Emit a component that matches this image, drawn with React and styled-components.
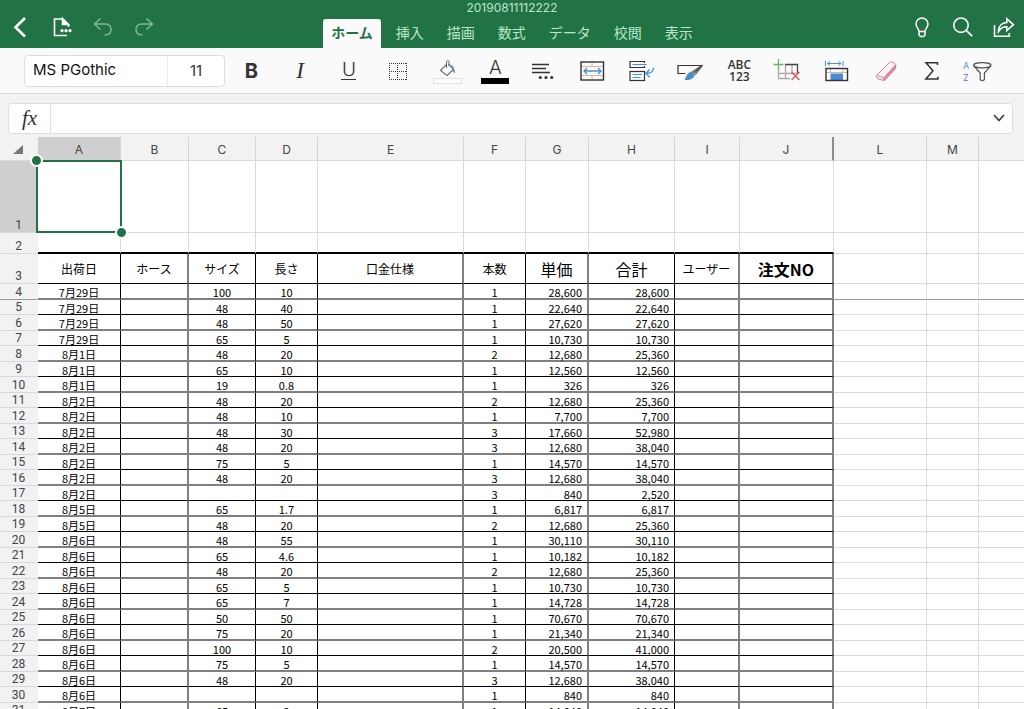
import React, { useState } from 'react';
import styled, { createGlobalStyle } from 'styled-components';

const GlobalStyle = createGlobalStyle`
  *,
  *::before,
  *::after {
    box-sizing: border-box;
  }
  body {
    margin: 0;
    font-family: Inter, 'Noto Sans CJK JP', sans-serif;
    background: #fff;
  }
  button,
  input {
    font: inherit;
    color: inherit;
    margin: 0;
    padding: 0;
    border: 0;
    background: none;
  }
`;

const tabs = ['ホーム', '挿入', '描画', '数式', 'データ', '校閲', '表示'];

const columns = [
  { id: 'A', width: 83, title: '出荷日' },
  { id: 'B', width: 68, title: 'ホース', thick: true },
  { id: 'C', width: 67, title: 'サイズ' },
  { id: 'D', width: 62, title: '長さ' },
  { id: 'E', width: 146, title: '口金仕様', thick: true },
  { id: 'F', width: 62, title: '本数' },
  { id: 'G', width: 63, title: '単価', large: true, number: true, thick: true },
  { id: 'H', width: 86, title: '合計', large: true, number: true },
  { id: 'I', width: 65, title: 'ユーザー', thick: true },
  { id: 'J', width: 94, title: '注文NO', large: true, bold: true, thick: true },
];

const plainColumns = [
  { id: 'L', width: 93 },
  { id: 'M', width: 52 },
  { id: '' },
];

// 出荷日, サイズ, 長さ, 本数, 単価, 合計
const orders = [
  ['7月29日', '100', '10', '1', '28,600', '28,600'],
  ['7月29日', '48', '40', '1', '22,640', '22,640'],
  ['7月29日', '48', '50', '1', '27,620', '27,620'],
  ['7月29日', '65', '5', '1', '10,730', '10,730'],
  ['8月1日', '48', '20', '2', '12,680', '25,360'],
  ['8月1日', '65', '10', '1', '12,560', '12,560'],
  ['8月1日', '19', '0.8', '1', '326', '326'],
  ['8月2日', '48', '20', '2', '12,680', '25,360'],
  ['8月2日', '48', '10', '1', '7,700', '7,700'],
  ['8月2日', '48', '30', '3', '17,660', '52,980'],
  ['8月2日', '48', '20', '3', '12,680', '38,040'],
  ['8月2日', '75', '5', '1', '14,570', '14,570'],
  ['8月2日', '48', '20', '3', '12,680', '38,040'],
  ['8月2日', '', '', '3', '840', '2,520'],
  ['8月5日', '65', '1.7', '1', '6,817', '6,817'],
  ['8月5日', '48', '20', '2', '12,680', '25,360'],
  ['8月6日', '48', '55', '1', '30,110', '30,110'],
  ['8月6日', '65', '4.6', '1', '10,182', '10,182'],
  ['8月6日', '48', '20', '2', '12,680', '25,360'],
  ['8月6日', '65', '5', '1', '10,730', '10,730'],
  ['8月6日', '65', '7', '1', '14,728', '14,728'],
  ['8月6日', '50', '50', '1', '70,670', '70,670'],
  ['8月6日', '75', '20', '1', '21,340', '21,340'],
  ['8月6日', '100', '10', '2', '20,500', '41,000'],
  ['8月6日', '75', '5', '1', '14,570', '14,570'],
  ['8月6日', '48', '20', '3', '12,680', '38,040'],
  ['8月6日', '', '', '1', '840', '840'],
  ['8月7日', '65', '2', '1', '14,040', '14,040'],
];

const toCells = ([date, size, length, count, price, total]) => ({
  A: date, C: size, D: length, F: count, G: price, H: total,
});

const BackIcon = () => (
  <HeaderSvg viewBox="0 0 24 24" strokeWidth="2.6">
    <path d="M16 3L6.5 12.3L16 21.5" />
  </HeaderSvg>
);

const FileIcon = () => (
  <HeaderSvg viewBox="0 0 24 24" strokeWidth="1.6">
    <path d="M13 4H4.5V20.5H17M18.5 9V12" />
    <path d="M12.5 3.5L18.5 9.5H12.5Z" fill="currentColor" />
    <g fill="currentColor" stroke="none">
      <circle cx="12" cy="15.7" r="1.6" />
      <circle cx="16" cy="15.7" r="1.6" />
      <circle cx="20" cy="15.7" r="1.6" />
    </g>
  </HeaderSvg>
);

const UndoIcon = () => (
  <HeaderSvg viewBox="0 0 24 24" strokeWidth="1.5">
    <path d="M9.5 3.5L3.5 9L9.5 14.5M3.5 9H14.5C18 9 20 11.5 20 14.5C20 17.8 17.5 20 13.5 20" />
  </HeaderSvg>
);

const RedoIcon = () => (
  <HeaderSvg viewBox="0 0 24 24" strokeWidth="1.5">
    <path d="M14.5 3.5L20.5 9L14.5 14.5M20.5 9H9.5C6 9 4 11.5 4 14.5C4 17.8 6.5 20 10.5 20" />
  </HeaderSvg>
);

const BulbIcon = () => (
  <HeaderSvg viewBox="0 0 24 24" strokeWidth="1.5">
    <path d="M9 16.5C9 13.5 6 12.5 6 9A6 6 0 0 1 18 9C18 12.5 15 13.5 15 16.5V20L13.5 21.5H10.5L9 20ZM9 16.5H15" />
  </HeaderSvg>
);

const SearchIcon = () => (
  <HeaderSvg viewBox="0 0 24 24" strokeWidth="1.6">
    <circle cx="10" cy="10.2" r="7.2" />
    <path d="M15.2 15.4L21.2 21.2" />
  </HeaderSvg>
);

const ShareIcon = () => (
  <HeaderSvg viewBox="0 0 24 24" strokeWidth="1.6">
    <path d="M2.5 10V21.3H17.3V18" />
    <path d="M6.5 16.5C6.5 11 9.8 7.7 14.8 7.5V3.8L21.4 9.7L14.8 15.5V11.8C11 11.8 8.5 13.3 6.5 16.5Z" />
  </HeaderSvg>
);

const BordersIcon = () => (
  <ToolSvg viewBox="0 0 40 32">
    <path d="M11 8.5H29M11 16.5H29M11 24.5H29M11.5 8V25M19.5 8V25M28.5 8V25" strokeDasharray="1 1" />
  </ToolSvg>
);

const FillIcon = () => (
  <ToolSvg viewBox="0 0 40 32">
    <path d="M19.5 9.5L13.5 15.5L20 20.5L26.5 14.5L21.5 9" stroke="#777" strokeWidth="1.3" />
    <path d="M19.5 13V6.5Q20.7 4.5 22 6.5V11" stroke="#666" />
    <path d="M23.5 9.5Q27.5 10.5 28 18.5L25.3 16L26.3 14.3Z" fill="#5b8fc0" stroke="none" />
    <rect x="6.5" y="23.5" width="28" height="5" fill="#fff" stroke="#e2e2e2" />
  </ToolSvg>
);

const AlignIcon = () => (
  <ToolSvg viewBox="0 0 40 32" strokeWidth="1.3">
    <path d="M8 9.5H25M8 13.5H22M8 17.5H26" />
    <g fill="#333" stroke="none">
      <circle cx="16.3" cy="22.5" r="1.6" />
      <circle cx="22" cy="22.5" r="1.6" />
      <circle cx="27.7" cy="22.5" r="1.6" />
    </g>
  </ToolSvg>
);

const MergeIcon = () => (
  <ToolSvg viewBox="0 0 40 32">
    <path d="M8 11.5H30M8 20.5H30M19 7V11M19 21V25" stroke="#d8b9a5" />
    <rect x="8" y="7" width="22.5" height="18" strokeWidth="1.4" />
    <path d="M11 16H28M14 13L11 16L14 19M25 13L28 16L25 19" stroke="#4a90cf" strokeWidth="1.3" />
  </ToolSvg>
);

const WrapIcon = () => (
  <ToolSvg viewBox="0 0 40 32" strokeWidth="1.2">
    <path d="M22.5 8V6.5H8V12.5H22.5V11" />
    <rect x="8" y="16.5" width="14.5" height="9" />
    <path d="M10.5 9.5H24.5M10.5 19.5H20M10.5 22.5H18.5" stroke="#4a90cf" />
    <path d="M31.5 12.5C31.5 16.5 29 18.5 24 18.5M27.5 14.5L23.7 18.5L27.7 22" stroke="#4a90cf" strokeWidth="1.3" />
  </ToolSvg>
);

const BrushIcon = () => (
  <ToolSvg viewBox="0 0 40 32" strokeWidth="1.2">
    <path d="M14.5 18.5H7V10.5H31L22 19" />
    <path d="M31.5 10L20.5 17.5M31.5 10.5L24 20" stroke="#555" />
    <path d="M14 24.5C16 23.5 15.5 17.5 20.5 17.5C24.5 18 24.5 24.5 14 24.5Z" fill="#4e8dcc" stroke="#4e8dcc" />
  </ToolSvg>
);

const InsertIcon = () => (
  <ToolSvg viewBox="0 0 40 32">
    <path d="M10.5 14V23.5H22M11 18.5H29M17.5 9V23M24 9V19" stroke="#aaa" strokeWidth="1.3" />
    <path d="M17 9.5H29.5V18" stroke="#444" strokeWidth="1.3" />
    <path d="M10.5 4V14M5.5 9.5H15.5" stroke="#6fae6a" strokeWidth="1.3" />
    <path d="M23.5 17L31.5 25M31.5 17L23.5 25" stroke="#e05252" strokeWidth="1.3" />
  </ToolSvg>
);

const WidthIcon = () => (
  <ToolSvg viewBox="0 0 40 32">
    <path d="M9 17.5H31M13.5 13V17M26 13V17" stroke="#c9b8a8" />
    <rect x="13.5" y="18.5" width="12.5" height="6.5" fill="#4a8bcf" stroke="none" />
    <rect x="9" y="13.5" width="21.5" height="12" strokeWidth="1.4" />
    <path d="M8.5 6V11M26 6V11M10.5 8.5H24M13 6.3L10.5 8.5L13 10.7M21.5 6.3L24 8.5L21.5 10.7" stroke="#4a90cf" />
  </ToolSvg>
);

const EraserIcon = () => (
  <ToolSvg viewBox="0 0 40 32">
    <path d="M10.5 20.5L23.5 7.5Q24.5 6.5 26 7L29 8.5Q30 9 29.8 10.5L29.5 13.5L19 24.8Q18 25.8 16.5 25.2L12 23.8Q10.5 23.3 10.5 20.5Z" fill="#fdf1f4" stroke="#d0869a" />
    <path d="M17.8 23L29.3 10L29.5 13.5L19 24.8Q18 25.6 17.3 25.2Z" fill="#dc8ba1" stroke="#d0869a" />
    <path d="M11 20.5L17.8 22.8" stroke="#d0869a" />
  </ToolSvg>
);

const SumIcon = () => (
  <ToolSvg viewBox="0 0 40 32" strokeWidth="1.5">
    <path d="M27.5 10V7.8H16L23 15.7L15.8 24H28V21.8" />
  </ToolSvg>
);

const SortIcon = () => (
  <ToolSvg viewBox="0 0 40 32">
    <text x="7" y="14" fontSize="9" fill="#5d95d6" stroke="none">A</text>
    <text x="7" y="26" fontSize="9" fill="#9064c4" stroke="none">Z</text>
    <ellipse cx="26.3" cy="10.3" rx="8.7" ry="2.6" stroke="#555" strokeWidth="1.2" />
    <path d="M17.6 10.5L24.2 18V24.5Q26.3 27 28.4 24.5V18L35 10.5" stroke="#555" strokeWidth="1.2" />
  </ToolSvg>
);

const FormatGlyph = () => (
  <Format>
    <span>ABC</span>
    <span>123</span>
  </Format>
);

function Header() {
  const [active, setActive] = useState('ホーム');

  return (
    <TopBar>
      <IconGroup>
        <IconButton aria-label="戻る"><BackIcon /></IconButton>
        <IconButton aria-label="ファイル"><FileIcon /></IconButton>
        <IconButton aria-label="元に戻す" disabled><UndoIcon /></IconButton>
        <IconButton aria-label="やり直し" disabled><RedoIcon /></IconButton>
      </IconGroup>
      <TitleArea>
        <FileName>20190811112222</FileName>
        <Tabs>
          {tabs.map((tab) => (
            <Tab key={tab} $active={tab === active} onClick={() => setActive(tab)}>
              {tab}
            </Tab>
          ))}
        </Tabs>
      </TitleArea>
      <IconGroup $end>
        <IconButton aria-label="操作アシスト"><BulbIcon /></IconButton>
        <IconButton aria-label="検索"><SearchIcon /></IconButton>
        <IconButton aria-label="共有"><ShareIcon /></IconButton>
      </IconGroup>
    </TopBar>
  );
}

function Ribbon() {
  return (
    <RibbonBar>
      <FontBox>
        <FontName aria-label="フォント" defaultValue="MS PGothic" />
        <FontSize aria-label="フォント サイズ" defaultValue="11" />
      </FontBox>
      <Tools>
        <ToolButton aria-label="太字"><Bold>B</Bold></ToolButton>
        <ToolButton aria-label="斜体"><Italic>I</Italic></ToolButton>
        <ToolButton aria-label="下線"><Underline>U</Underline></ToolButton>
        <ToolButton aria-label="罫線"><BordersIcon /></ToolButton>
        <ToolButton aria-label="塗りつぶしの色"><FillIcon /></ToolButton>
        <ToolButton aria-label="フォントの色"><FontColor>A</FontColor></ToolButton>
        <ToolButton aria-label="配置"><AlignIcon /></ToolButton>
        <ToolButton aria-label="セルの結合"><MergeIcon /></ToolButton>
        <ToolButton aria-label="折り返し"><WrapIcon /></ToolButton>
        <ToolButton aria-label="セルのスタイル"><BrushIcon /></ToolButton>
        <ToolButton aria-label="表示形式"><FormatGlyph /></ToolButton>
        <ToolButton aria-label="挿入と削除"><InsertIcon /></ToolButton>
        <ToolButton aria-label="セルのサイズ"><WidthIcon /></ToolButton>
        <ToolButton aria-label="クリア"><EraserIcon /></ToolButton>
        <ToolButton aria-label="オート SUM"><SumIcon /></ToolButton>
        <ToolButton aria-label="並べ替えとフィルター"><SortIcon /></ToolButton>
      </Tools>
    </RibbonBar>
  );
}

function FormulaBar() {
  return (
    <FormulaArea>
      <FormulaBox>
        <FxLabel htmlFor="formula">fx</FxLabel>
        <FormulaInput id="formula" />
        <ExpandButton aria-label="数式バーの展開">
          <svg width="14" height="10" viewBox="0 0 14 10" fill="none" stroke="#444" strokeWidth="1.8">
            <path d="M2 1L7 6.5L12 1" />
          </svg>
        </ExpandButton>
      </FormulaBox>
    </FormulaArea>
  );
}

function Sheet() {
  const all = [...columns, ...plainColumns];

  return (
    <SheetArea>
      <Grid>
        <colgroup>
          <col width="38" />
          {all.map((col) => <col key={col.id} width={col.width} />)}
        </colgroup>
        <thead>
          <tr>
            <Corner>
              <svg width="10" height="10" viewBox="0 0 10 10"><path d="M10 0V9H0Z" fill="#777" /></svg>
            </Corner>
            {all.map((col) => (
              <ColumnHead key={col.id} scope="col" $selected={col.id === 'A'} $hiddenNext={col.id === 'J'}>
                {col.id}
              </ColumnHead>
            ))}
          </tr>
        </thead>
        <tbody>
          <Row $height={72}>
            <RowHead scope="row" $selected>1</RowHead>
            {all.map((col) => (
              <PlainCell key={col.id}>
                {col.id === 'A' && <Selection />}
              </PlainCell>
            ))}
          </Row>
          <Row $height={21}>
            <RowHead scope="row">2</RowHead>
            {columns.map((col) => <PlainCell key={col.id} $tableTop />)}
            {plainColumns.map((col) => <PlainCell key={col.id} />)}
          </Row>
          <Row $height={30}>
            <RowHead scope="row">3</RowHead>
            {columns.map((col) => (
              <TitleCell key={col.id} $thick={col.thick} $large={col.large} $bold={col.bold}>
                {col.title}
              </TitleCell>
            ))}
            {plainColumns.map((col) => <PlainCell key={col.id} />)}
          </Row>
          {orders.map((order, i) => {
            const cells = toCells(order);
            const soft = i % 2 === 0;
            return (
              <Row key={i} $height={soft ? 16 : 15}>
                <RowHead scope="row" $frozen={i === 0}>{i + 4}</RowHead>
                {columns.map((col) => (
                  <DataCell key={col.id} $thick={col.thick} $number={col.number} $soft={soft}>
                    {cells[col.id]}
                  </DataCell>
                ))}
                {plainColumns.map((col) => <PlainCell key={col.id} $frozen={i === 0} />)}
              </Row>
            );
          })}
        </tbody>
      </Grid>
    </SheetArea>
  );
}

export default function App() {
  return (
    <Page>
      <GlobalStyle />
      <Header />
      <Ribbon />
      <FormulaBar />
      <Sheet />
    </Page>
  );
}

const Page = styled.div`
  display: flex;
  flex-direction: column;
  height: 100vh;
  overflow: hidden;
`;

const TopBar = styled.header`
  display: grid;
  grid-template-columns: 1fr auto 1fr;
  flex: none;
  background: #217346;
  color: #fff;
`;

const IconGroup = styled.div`
  display: flex;
  align-items: center;
  justify-content: ${(p) => (p.$end ? 'flex-end' : 'flex-start')};
  padding-top: 6px;
`;

const IconButton = styled.button`
  display: flex;
  justify-content: center;
  width: 41px;

  &:disabled {
    color: #7fb893;
  }
`;

const HeaderSvg = styled.svg`
  width: 24px;
  height: 24px;
  fill: none;
  stroke: currentColor;
`;

const TitleArea = styled.div`
  display: flex;
  flex-direction: column;
`;

const FileName = styled.div`
  height: 19px;
  font-size: 12px;
  line-height: 15px;
  text-align: center;
  color: #b9e6c8;
`;

const Tabs = styled.nav`
  display: flex;
  gap: 7px;
`;

const Tab = styled.button`
  height: 29px;
  padding: 0 8px 3px;
  border-radius: 3px 3px 0 0;
  font-family: 'Noto Sans CJK JP', sans-serif;
  font-size: 14px;
  line-height: 26px;
  font-weight: ${(p) => (p.$active ? 700 : 400)};
  color: ${(p) => (p.$active ? '#217346' : '#b9e6c8')};
  background: ${(p) => (p.$active ? '#fafafa' : 'none')};
`;

const RibbonBar = styled.div`
  display: flex;
  align-items: center;
  flex: none;
  height: 46px;
  padding: 0 22px 0 24px;
  background: #fafafa;
  border-bottom: 1px solid #d9d9d9;
`;

const FontBox = styled.div`
  display: flex;
  flex: none;
  height: 32px;
  margin-right: 2px;
  background: #fff;
  border: 1px solid #dedede;
  border-radius: 4px;
`;

const FontName = styled.input`
  width: 143px;
  padding: 0 0 2px 8px;
  font-size: 15px;
  color: #111;
  border-right: 1px solid #ebebeb;
`;

const FontSize = styled.input`
  width: 56px;
  font-size: 15px;
  text-align: center;
  color: #333;
`;

const Tools = styled.div`
  display: grid;
  grid-template-columns: repeat(14, 49fr) 40fr 52fr;
  flex: 1;
`;

const ToolButton = styled.button`
  display: flex;
  align-items: center;
  justify-content: center;
  height: 32px;
  color: #333;
`;

const ToolSvg = styled.svg`
  width: 40px;
  height: 32px;
  flex: none;
  fill: none;
  stroke: #333;
`;

const Bold = styled.span`
  font-size: 20px;
  font-weight: 700;
`;

const Italic = styled.span`
  font-family: 'Liberation Serif', serif;
  font-size: 23px;
  font-style: italic;
`;

const Underline = styled.span`
  width: 15px;
  font-size: 19px;
  font-weight: 300;
  line-height: 18px;
  border-bottom: 1px solid #333;
`;

const FontColor = styled.span`
  width: 28px;
  height: 26px;
  font-size: 19px;
  font-weight: 300;
  line-height: 20px;
  border-bottom: 6px solid #000;
`;

const Format = styled.span`
  display: flex;
  flex-direction: column;
  font-family: 'Open Sans', sans-serif;
  font-size: 12px;
  font-weight: 600;
  line-height: 12px;
`;

const FormulaArea = styled.div`
  flex: none;
  padding: 9px 11px 3px 8px;
  background: #f2f2f2;
`;

const FormulaBox = styled.div`
  display: flex;
  height: 31px;
  background: #fff;
  border: 1px solid #dedede;
  border-radius: 4px;
`;

const FxLabel = styled.label`
  width: 42px;
  font-family: 'Liberation Serif', serif;
  font-size: 21px;
  font-style: italic;
  line-height: 29px;
  text-align: center;
  color: #333;
  border-right: 1px solid #dedede;
`;

const FormulaInput = styled.input`
  flex: 1;
  padding: 0 8px;
  font-size: 14px;
`;

const ExpandButton = styled.button`
  display: flex;
  align-items: center;
  justify-content: center;
  width: 26px;
`;

const SheetArea = styled.main`
  flex: 1;
  min-height: 0;
  overflow: hidden;
`;

const Grid = styled.table`
  width: 100%;
  table-layout: fixed;
  border-collapse: separate;
  border-spacing: 0;

  th,
  td {
    padding: 0;
  }

  th:last-child,
  td:last-child {
    border-right: 0;
  }
`;

const Corner = styled.td`
  text-align: right;
  background: #f2f2f2;
  border-right: 1px solid #f2f2f2;
  border-bottom: 1px solid #dcdcdc;

  svg {
    margin-right: 14px;
  }
`;

const ColumnHead = styled.th`
  height: 24px;
  font-size: 12px;
  font-weight: 400;
  line-height: 20px;
  color: #444;
  background: ${(p) => (p.$selected ? '#cfcfcf' : '#f2f2f2')};
  border-right: ${(p) => (p.$hiddenNext ? '2px solid #8c8c8c' : '1px solid #d4d4d4')};
  border-bottom: 1px solid #dcdcdc;

  && {
    padding-top: 2px;
  }
`;

const Row = styled.tr`
  height: ${(p) => p.$height}px;
`;

const RowHead = styled.th`
  font-family: Roboto, sans-serif;
  font-size: 12px;
  font-weight: 400;
  line-height: 12px;
  vertical-align: bottom;
  color: #444;
  background: ${(p) => (p.$selected ? '#cfcfcf' : '#f2f2f2')};
  border-right: 1px solid #f2f2f2;
  border-bottom: 1px solid ${(p) => (p.$frozen ? '#999' : '#d9d9d9')};

  && {
    padding-bottom: 1px;
  }
`;

const PlainCell = styled.td`
  position: relative;
  border-right: 1px solid #dcdcdc;
  border-bottom: ${(p) => (p.$tableTop ? '2px solid #000' : `1px solid ${p.$frozen ? '#999' : '#dcdcdc'}`)};
`;

const Cell = styled.td`
  font-family: 'Noto Sans CJK JP', sans-serif;
  color: #000;
  border-right: ${(p) => (p.$thick ? '2px solid #808080' : '1px solid #000')};
`;

const TitleCell = styled(Cell)`
  font-size: ${(p) => (p.$large ? 16 : 12)}px;
  font-weight: ${(p) => (p.$bold ? 700 : 400)};
  line-height: 24px;
  text-align: center;
  border-bottom: 1px solid #000;

  && {
    padding-top: 1px;
  }
`;

const DataCell = styled(Cell)`
  font-size: 11px;
  line-height: 12px;
  vertical-align: bottom;
  text-align: ${(p) => (p.$number ? 'right' : 'center')};
  border-bottom: ${(p) => (p.$soft ? '2px solid #808080' : '1px solid #000')};

  && {
    padding-right: ${(p) => (p.$number ? 5 : 0)}px;
  }
`;

const Selection = styled.div`
  position: absolute;
  z-index: 1;
  inset: -1px -2px -1px -2px;
  border: 2px solid #217346;

  &::before,
  &::after {
    content: '';
    position: absolute;
    width: 13px;
    height: 13px;
    border: 2px solid #fff;
    border-radius: 50%;
    background: #217346;
  }

  &::before {
    top: -8px;
    left: -8px;
  }

  &::after {
    right: -8px;
    bottom: -8px;
  }
`;
